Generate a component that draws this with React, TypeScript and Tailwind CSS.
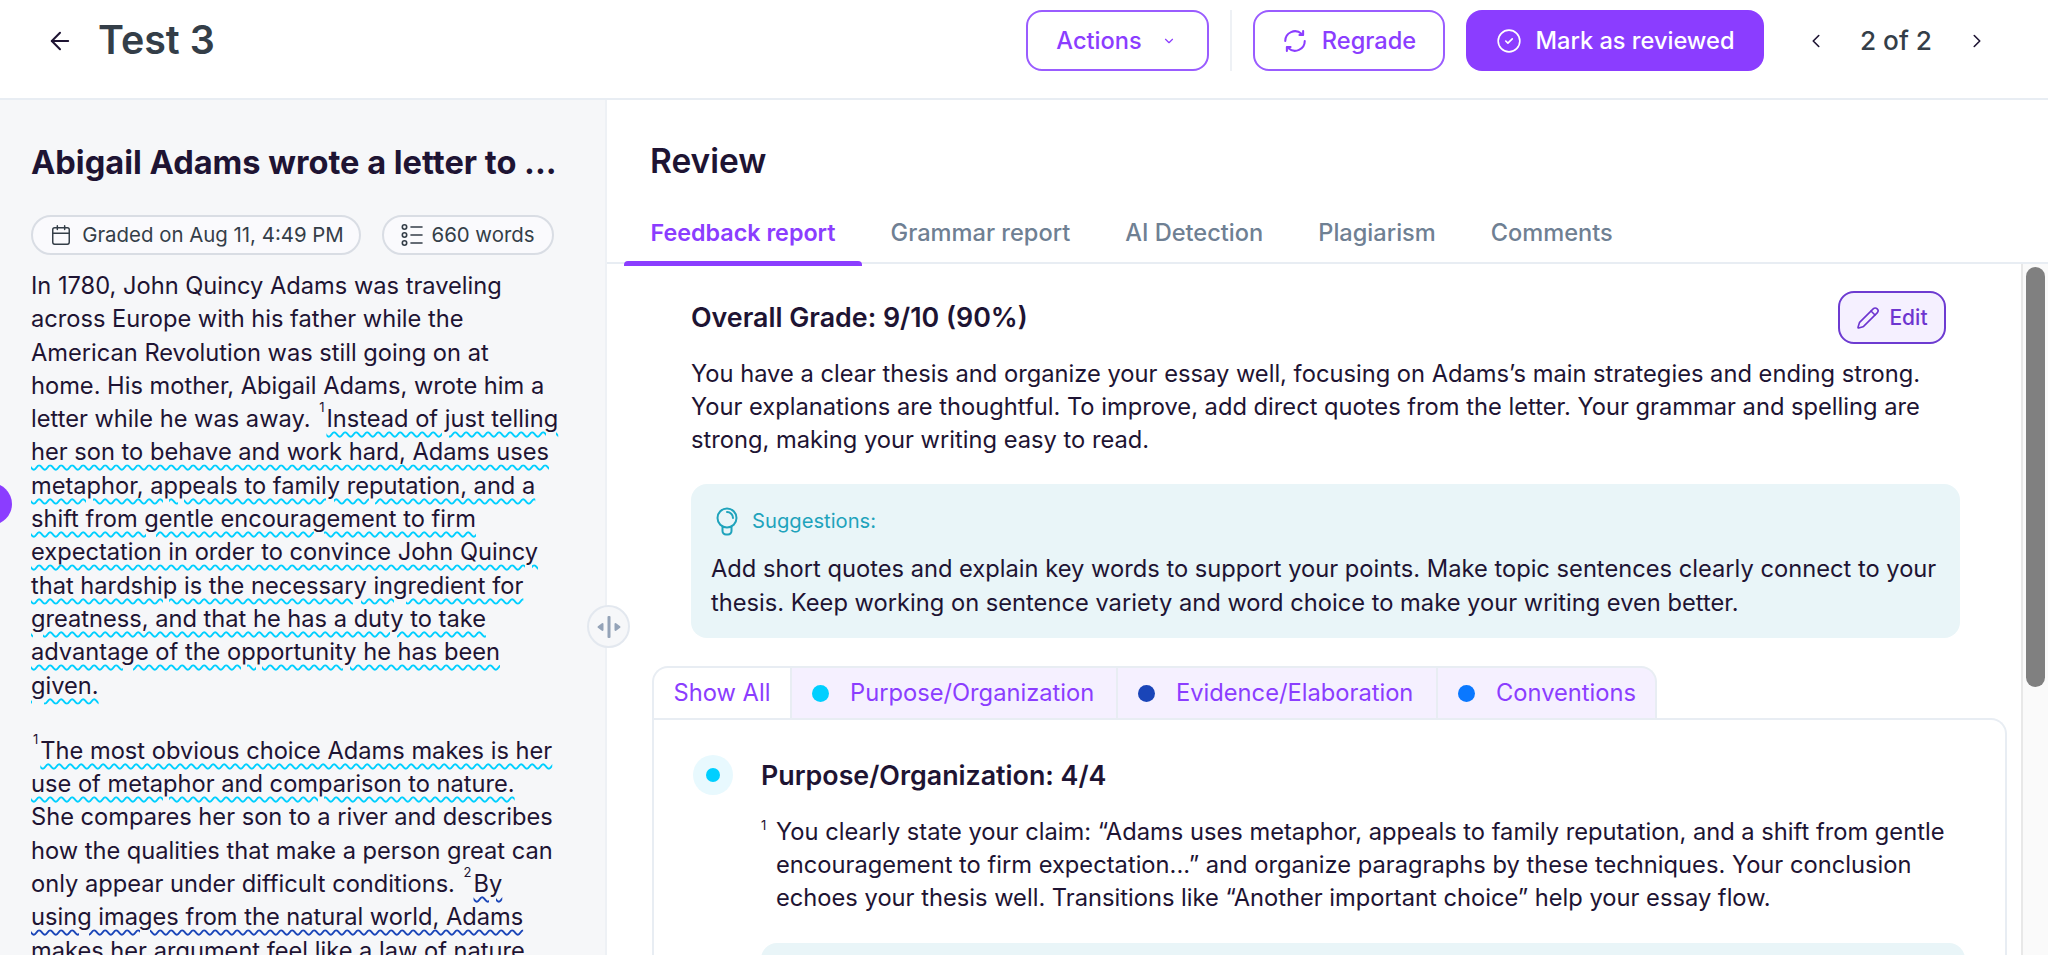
import { ArrowLeft, Calendar, ChevronDown, ChevronLeft, ChevronRight, CircleCheck, Pencil } from "lucide-react";

const ink = "text-[#1e1433]";

function Squiggle({ color, children }: { color: string; children: React.ReactNode }) {
  return (
    <span className={`underline decoration-wavy decoration-[1.5px] underline-offset-[4px] ${color}`}>
      {children}
    </span>
  );
}

function Ref({ n }: { n: number }) {
  return <span className="text-[13px] font-normal text-[#1e1433] ml-[2px] mr-[2px] -top-[15px] relative leading-none">{n}</span>;
}

function ListIcon() {
  return (
    <svg className="w-[22px] h-[24px]" viewBox="0 0 22 24" fill="none" stroke="#343e48" strokeWidth="1.6">
      <circle cx="3.5" cy="4" r="2.2" />
      <circle cx="3.5" cy="12" r="2.2" />
      <circle cx="3.5" cy="20" r="2.2" />
      <path d="M10 4h11M10 12h11M10 20h11" strokeLinecap="round" />
    </svg>
  );
}

function RegradeIcon() {
  return (
    <svg className="w-[26px] h-[26px]" viewBox="0 0 24 24" fill="none" stroke="currentColor" strokeWidth="1.9" strokeLinecap="round" strokeLinejoin="round">
      <path d="M3 12a9 9 0 0 1 15-6.7l1 .9" />
      <path d="M19.5 2.8v3.6h-3.4" />
      <path d="M21 12a9 9 0 0 1-15 6.7l-1-.9" />
      <path d="M4.5 21.2v-3.6h3.4" />
    </svg>
  );
}

function BulbIcon() {
  return (
    <svg className="w-[22px] h-[29px]" viewBox="0 0 22 29" fill="none" stroke="#1fa3bc" strokeWidth="2" strokeLinecap="round">
      <circle cx="11" cy="11" r="9.5" />
      <path d="M6.5 19.5v4.5a3.5 3.5 0 0 0 3.5 3.5h2a3.5 3.5 0 0 0 3.5-3.5v-4.5" />
      <path d="M11 5a6 6 0 0 1 6 6" />
    </svg>
  );
}

const tabs = ["Feedback report", "Grammar report", "AI Detection", "Plagiarism", "Comments"];

const filters = [
  { label: "Purpose/Organization", dot: "bg-[#00cfff]", w: "w-[326px]" },
  { label: "Evidence/Elaboration", dot: "bg-[#1a45b8]", w: "w-[320px]" },
  { label: "Conventions", dot: "bg-[#0a78ff]", w: "w-[221px] border-r-2 rounded-tr-[16px]" },
];

export default function App() {
  return (
    <div className={`relative h-[955px] overflow-hidden bg-white font-['Inter',sans-serif] ${ink}`}>
      <header className="h-[100px] flex items-start border-b-2 border-[#e8edf3] pt-[10px]">
        <div className="flex items-center flex-1 pl-[46px] h-[61px]">
          <ArrowLeft className="w-[28px] h-[28px] text-[#1e1433]" strokeWidth={1.75} />
          <h1 className="ml-[24px] text-[39.4px] leading-none font-semibold text-[#343e48]">Test 3</h1>
        </div>
        <div className="flex items-center h-[61px] mr-[60px]">
          <button className="w-[183px] h-[61px] flex items-center justify-center gap-[20px] pr-[3px] border-2 border-[#9a5cff] rounded-[16px] text-[23.6px] font-medium text-[#8b3dff]">
            Actions
            <ChevronDown className="w-[14px] h-[14px]" strokeWidth={2} />
          </button>
          <div className="w-[2px] h-[61px] bg-[#eef1f5] mx-[21px]" />
          <button className="w-[192px] h-[61px] flex items-center justify-center gap-[14px] border-2 border-[#9a5cff] rounded-[16px] text-[23.6px] font-medium text-[#8b3dff]">
            <RegradeIcon />
            Regrade
          </button>
          <button className="ml-[21px] w-[298px] h-[61px] flex items-center justify-center gap-[14px] rounded-[16px] bg-[#8b3dff] text-[23.6px] font-medium text-white">
            <CircleCheck className="w-[26px] h-[26px]" strokeWidth={1.5} />
            Mark as reviewed
          </button>
          <ChevronLeft className="ml-[41px] w-[22px] h-[22px] text-[#1e1433]" strokeWidth={1.75} />
          <span className="ml-[33px] text-[26.2px] font-medium text-[#343e48]">2 of 2</span>
          <ChevronRight className="ml-[34px] w-[22px] h-[22px] text-[#1e1433]" strokeWidth={1.75} />
        </div>
      </header>

      <div className="flex h-[855px]">
        <aside className="w-[607px] shrink-0 bg-[#f6f7f9] border-r-2 border-[#eef1f5] pl-[31px] pr-[43px] pt-[43px] overflow-hidden">
          <h2 className="text-[32.6px] leading-[38px] font-bold whitespace-nowrap">Abigail Adams wrote a letter to ...</h2>
          <div className="flex gap-[21px] mt-[34px]">
            <div className="h-[40px] w-[330px] flex items-center justify-center gap-[10px] pl-[2px] rounded-full border-2 border-[#d9dde4] bg-[#fafafd] text-[20.4px] text-[#343e48]">
              <Calendar className="w-[22px] h-[24px]" strokeWidth={1.6} />
              Graded on Aug 11, 4:49 PM
            </div>
            <div className="h-[40px] w-[172px] flex items-center justify-center gap-[8px] rounded-full border-2 border-[#d9dde4] bg-[#fafafd] text-[20.4px] text-[#343e48]">
              <ListIcon />
              660 words
            </div>
          </div>
          <p className="mt-[14px] text-[23.65px] leading-[33.3px]">
            In 1780, John Quincy Adams was traveling across Europe with his father while the American Revolution was still going on at home. His mother, Abigail Adams, wrote him a letter while he was away.{" "}
            <Ref n={1} />
            <Squiggle color="decoration-[#00cfff]">
              Instead of just telling her son to behave and work hard, Adams uses metaphor, appeals to family reputation, and a shift from gentle encouragement to firm expectation in order to convince John Quincy that hardship is the necessary ingredient for greatness, and that he has a duty to take advantage of the opportunity he has been given.
            </Squiggle>
          </p>
          <p className="mt-[32px] text-[23.65px] leading-[33.3px]">
            <Ref n={1} />
            <Squiggle color="decoration-[#00cfff]">The most obvious choice Adams makes is her use of metaphor and comparison to nature.</Squiggle>{" "}
            She compares her son to a river and describes how the qualities that make a person great can only appear under difficult conditions.{" "}
            <Ref n={2} />
            <Squiggle color="decoration-[#1a45b8]">By using images from the natural world, Adams makes her argument feel like a law of nature</Squiggle>
          </p>
        </aside>

        <main className="flex-1 min-w-0 flex flex-col">
          <div className="h-[164px] border-b-2 border-[#e8edf3] pt-[41px] pl-[17px] relative">
            <h2 className="ml-[26px] text-[33.5px] leading-[40px] font-semibold">Review</h2>
            <nav className="flex gap-[2px] mt-[36px]">
              {tabs.map((t, i) => (
                <div key={t} className="relative h-[47px] px-[26.5px] flex items-start">
                  <span className={`leading-[32px] ${i === 0 ? "text-[23.3px] font-semibold text-[#8b3dff]" : "text-[23.6px] font-medium text-[#6f8093]"}`}>{t}</span>
                  {i === 0 && <div className="absolute left-0 right-0 bottom-[-2px] h-[5px] rounded-t-[4px] bg-[#8b3dff]" />}
                </div>
              ))}
            </nav>
          </div>

          <div className="flex-1 flex min-h-0">
            <div className="flex-1 min-w-0 pl-[45px] pr-[14px] overflow-hidden">
              <div className="pl-[39px] pr-[47px] pt-[27px]">
                <div className="flex items-start justify-between h-[53px]">
                  <h3 className="text-[26.8px] leading-[54px] -mt-[1px] font-semibold">Overall Grade: 9/10 (90%)</h3>
                  <button className="w-[108px] h-[53px] mr-[14px] flex items-center justify-center gap-[9px] rounded-[16px] border-2 border-[#6d3bd1] bg-[#f5f0ff] text-[21px] font-medium text-[#6d35d0]">
                    <Pencil className="w-[24px] h-[24px]" strokeWidth={1.6} />
                    Edit
                  </button>
                </div>
                <p className="mt-[13px] text-[23.7px] leading-[33px]">
                  You have a clear thesis and organize your essay well, focusing on Adams’s main strategies and ending strong. Your explanations are thoughtful. To improve, add direct quotes from the letter. Your grammar and spelling are strong, making your writing easy to read.
                </p>
                <div className="mt-[28px] h-[154px] rounded-[16px] bg-[#e9f5f8] pl-[20px] pr-[20px] pt-[21px]">
                  <div className="flex items-center gap-[14px] h-[32px] pl-[5px]">
                    <BulbIcon />
                    <span className="text-[20.2px] text-[#1fa3bc]">Suggestions:</span>
                  </div>
                  <p className="mt-[15px] text-[23.7px] leading-[33.5px]">
                    Add short quotes and explain key words to support your points. Make topic sentences clearly connect to your thesis. Keep working on sentence variety and word choice to make your writing even better.
                  </p>
                </div>
              </div>

              <div className="mt-[28px]">
                <div className="flex h-[52px]">
                  <div className="w-[138px] flex items-center justify-center rounded-tl-[16px] border-l-2 border-t-2 border-[#e8edf3] bg-white text-[23.7px] text-[#8b3dff]">Show All</div>
                  {filters.map((f) => (
                    <div key={f.label} className={`${f.w} flex items-center gap-[21px] pl-[20px] border-l-2 border-t-2 border-[#e8edf3] bg-[#f5f0ff] text-[23.7px] text-[#8b3dff]`}>
                      <span className={`w-[17px] h-[17px] rounded-full ${f.dot}`} />
                      {f.label}
                    </div>
                  ))}
                </div>
                <div className="h-[400px] rounded-tr-[16px] border-2 border-b-0 border-[#e8edf3] pl-[39px] pr-[40px] pt-[35px]">
                  <div className="flex items-center gap-[28px] h-[40px]">
                    <div className="w-[40px] h-[40px] rounded-full bg-[#e8f9fe] flex items-center justify-center">
                      <span className="w-[14px] h-[14px] rounded-full bg-[#00cfff]" />
                    </div>
                    <h3 className="text-[26.8px] font-semibold">Purpose/Organization: 4/4</h3>
                  </div>
                  <div className="flex mt-[20px] ml-[68px]">
                    <span className="text-[13px] leading-[20px] w-[15px] shrink-0">1</span>
                    <p className="text-[23.7px] leading-[33px]">
                      You clearly state your claim: “Adams uses metaphor, appeals to family reputation, and a shift from gentle encouragement to firm expectation...” and organize paragraphs by these techniques. Your conclusion echoes your thesis well. Transitions like “Another important choice” help your essay flow.
                    </p>
                  </div>
                  <div className="mt-[29px] ml-[68px] h-[80px] rounded-[16px] bg-[#e9f5f8]" />
                </div>
              </div>
            </div>

            <div className="w-[27px] shrink-0 bg-[#fafafa] border-l-2 border-[#e8e8e8] pl-[3px] pr-[3px] pt-[3px]">
              <div className="w-[19px] h-[420px] rounded-full bg-[#808080]" />
            </div>
          </div>
        </main>
      </div>

      <div className="absolute left-[-30px] top-[483px] w-[42px] h-[42px] rounded-full bg-[#8b3dff]" />
      <div className="absolute left-[587px] top-[605px] w-[43px] h-[43px] rounded-full border-2 border-[#e3e8ef] bg-[#f6f7f9] flex items-center justify-center text-[#94a3b8]">
        <svg className="w-[24px] h-[24px]" viewBox="0 0 24 24" fill="currentColor" stroke="currentColor" strokeLinejoin="round">
          <path d="M5.5 9L1.5 12L5.5 15Z" strokeWidth="2" />
          <path d="M18.5 9L22.5 12L18.5 15Z" strokeWidth="2" />
          <rect x="10.5" y="1" width="3" height="22" rx="1" stroke="none" />
        </svg>
      </div>
    </div>
  );
}
